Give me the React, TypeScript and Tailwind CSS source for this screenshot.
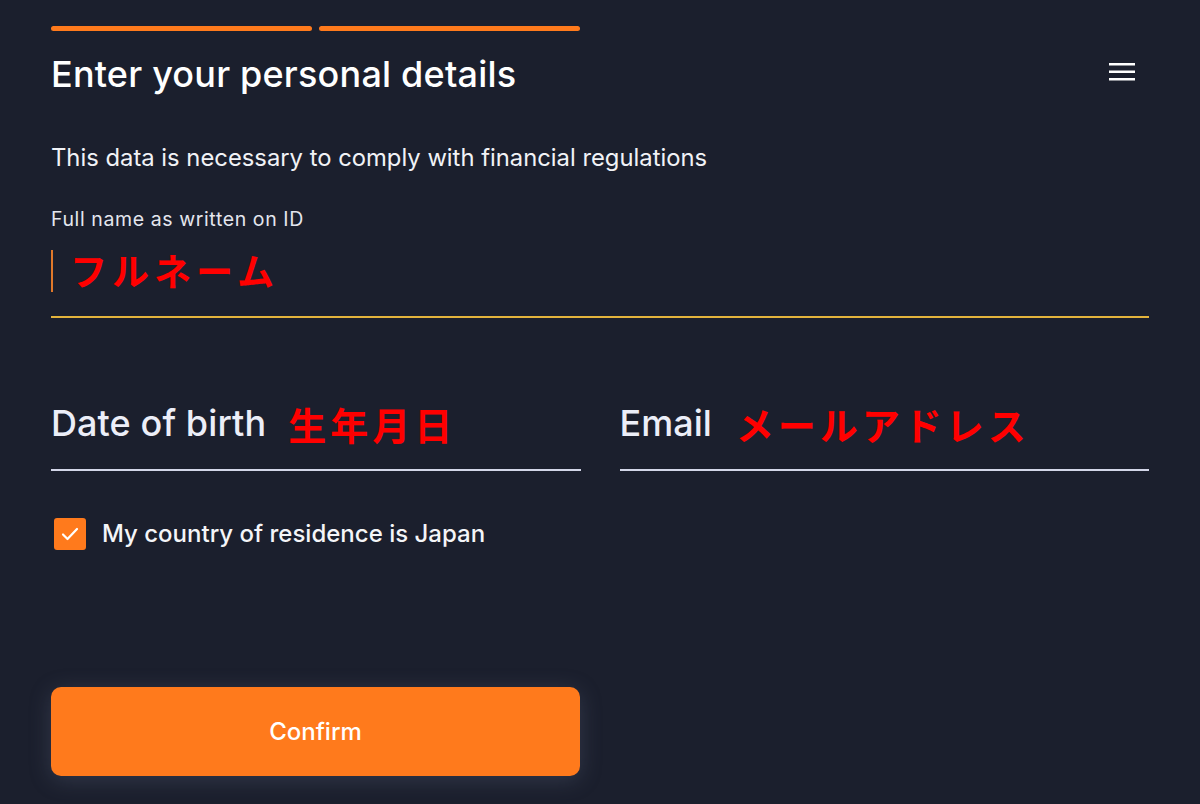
import React from 'react';

const jp = { fontFamily: '"Noto Sans CJK JP", sans-serif' };

export default function App() {
  return (
    <div
      className="min-h-screen w-full bg-[#1b1f2d] text-white px-[51px] pt-[26px]"
      style={{ fontFamily: 'Inter, "Noto Sans", sans-serif' }}
    >
      {/* progress */}
      <div className="flex gap-[7px] w-[529px]">
        <div className="h-[5px] flex-1 rounded-full bg-[#ff7a1c]" />
        <div className="h-[5px] flex-1 rounded-full bg-[#ff7a1c]" />
      </div>

      <div className="flex items-center justify-between mt-[20px] h-[46px] pr-[14px]">
        <h1 className="text-[36px] leading-[46px] font-medium tracking-[0.2px]">Enter your personal details</h1>
        <svg width="26" height="20" viewBox="0 0 26 20" className="mb-[4px]">
          <rect x="0" y="1" width="26" height="2.5" fill="#fff" />
          <rect x="0" y="8.5" width="26" height="2.5" fill="#fff" />
          <rect x="0" y="16" width="26" height="2.5" fill="#fff" />
        </svg>
      </div>

      <p className="mt-[46px] text-[23.8px] leading-[30px] text-[#f1f2f6]">
        This data is necessary to comply with financial regulations
      </p>

      <div className="mt-[34px]">
        <div className="text-[19.5px] leading-[24px] text-[#e4e6ee] tracking-[0.6px]">Full name as written on ID</div>
        <div className="flex items-center h-[46px] mt-[17px]">
          <div className="w-[2px] h-[42px] bg-[#e0782a]" />
          <span className="ml-[17px] text-[37px] font-bold text-[#ff0000] tracking-[5px]" style={jp}>
            フルネーム
          </span>
        </div>
        <div className="mt-[22px] h-[2px] w-full bg-[#e3b33c]" />
      </div>

      <div className="grid grid-cols-2 gap-[39px] mt-[82px]">
        <div>
          <div className="flex items-center h-[46px]">
            <span className="text-[36px] font-medium text-[#eceef8] tracking-[0.1px]">Date of birth</span>
            <span className="ml-[22px] text-[38px] font-bold text-[#ff0000] tracking-[4px]" style={jp}>
              生年月日
            </span>
          </div>
          <div className="mt-[23px] h-[2px] w-full bg-[#d3d6e8]" />
        </div>
        <div>
          <div className="flex items-center h-[46px]">
            <span className="text-[36px] font-medium text-[#eceef8]">Email</span>
            <span className="ml-[24px] text-[38px] font-bold text-[#ff0000] tracking-[4px]" style={jp}>
              メールアドレス
            </span>
          </div>
          <div className="mt-[23px] h-[2px] w-full bg-[#d3d6e8]" />
        </div>
      </div>

      <div className="flex items-center mt-[45px] ml-[3px]">
        <div className="w-[32px] h-[32px] rounded-[3px] bg-[#ff7a1c] flex items-center justify-center">
          <svg width="18" height="14" viewBox="0 0 18 14" fill="none">
            <path d="M2 7.5L6.5 12L16 2" stroke="#fff" strokeWidth="2.2" strokeLinecap="round" strokeLinejoin="round" />
          </svg>
        </div>
        <span className="ml-[16px] text-[24px] font-medium text-[#f4f5f8]">
          My country of residence is Japan
        </span>
      </div>

      <button className="mt-[135px] w-[529px] h-[89px] rounded-[10px] bg-[#ff7a1c] text-white text-[24px] font-medium shadow-[0_4px_22px_rgba(120,130,160,0.25)]">
        Confirm
      </button>
    </div>
  );
}
